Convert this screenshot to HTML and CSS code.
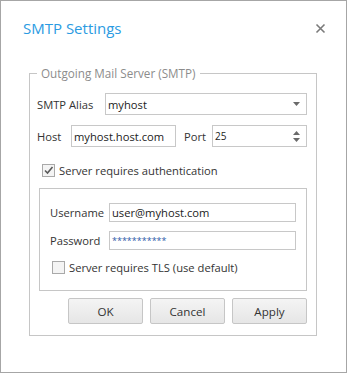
FILE: index.html
```html
<!DOCTYPE html>
<html>
<head>
<meta charset="utf-8">
<link rel="stylesheet" href="styles.css">
</head>
<body>
<div class="dialog">
  <div class="header">
    <span class="title">SMTP Settings</span>
    <svg class="close" width="11" height="11" viewBox="0 0 11 11"><path d="M1.5 1.5L9.5 9.5M9.5 1.5L1.5 9.5" stroke="#7a7a7a" stroke-width="1.6" fill="none"/></svg>
  </div>
  <fieldset class="group">
    <legend class="legend">Outgoing Mail Server (SMTP)</legend>
    <div class="row row-alias">
      <span class="lbl lbl-alias">SMTP Alias</span>
      <div class="field field-select"><span class="val">myhost</span><svg class="drop" width="7" height="4" viewBox="0 0 7 4"><path d="M0 0H7L3.5 4Z" fill="#6a6a6a"/></svg></div>
    </div>
    <div class="row row-host">
      <span class="lbl lbl-host">Host</span>
      <div class="field field-host"><span class="val">myhost.host.com</span></div>
      <span class="lbl lbl-port">Port</span>
      <div class="field field-spin"><span class="val val-small">25</span><svg class="spin" width="7" height="11" viewBox="0 0 7 11"><path d="M0 4H7L3.5 0Z M0 7H7L3.5 11Z" fill="#6a6a6a"/></svg></div>
    </div>
    <div class="check check-auth">
      <span class="box"><svg width="11" height="11" viewBox="0 0 11 11"><path d="M2 5.5L4.5 8L9.5 2" stroke="#5a5a5a" stroke-width="1.6" fill="none"/></svg></span>
      <span class="check-text">Server requires authentication</span>
    </div>
    <div class="authbox">
      <div class="row row-user">
        <span class="lbl lbl-user">Username</span>
        <div class="field field-text"><span class="val">user@myhost.com</span></div>
      </div>
      <div class="row row-pass">
        <span class="lbl lbl-user">Password</span>
        <div class="field field-text"><span class="val pw">***********</span></div>
      </div>
      <div class="check check-tls">
        <span class="box"></span>
        <span class="check-text">Server requires TLS (use default)</span>
      </div>
    </div>
    <div class="buttons">
      <button class="btn">OK</button>
      <button class="btn">Cancel</button>
      <button class="btn">Apply</button>
    </div>
  </fieldset>
</div>
</body>
</html>
```

FILE: styles.css
```css
html, body {
  margin: 0;
  padding: 0;
  background: #ffffff;
}
.dialog {
  box-sizing: border-box;
  width: 347px;
  height: 373px;
  border: 1px solid #a6a6a6;
  background: #ffffff;
  font-family: "Open Sans", "Noto Sans", sans-serif;
  font-size: 11.2px;
  color: #333333;
}
.header {
  display: flex;
  align-items: center;
  justify-content: space-between;
  height: 50px;
  padding: 0 20px 0 22px;
  margin-top: 2px;
}
.title {
  font-size: 15px;
  color: #2a9be2;
}
.close {
  display: block;
}
.group {
  box-sizing: border-box;
  margin: 12px 0 0 28px;
  width: 288px;
  height: 271px;
  padding: 0 9px 0 7px;
  border: 1px solid #c6c6c6;
}
.legend {
  padding: 0 4px;
  color: #8c8c8c;
  font-size: 11.7px;
  line-height: 16px;
}
.row {
  display: flex;
  align-items: center;
}
.row-alias {
  margin-top: 12px;
}
.row-host {
  margin-top: 10px;
}
.lbl {
  flex: none;
  white-space: nowrap;
}
.lbl-alias { width: 68px; }
.lbl-host { width: 34px; }
.lbl-port { width: 28px; margin-left: 8px; }
.lbl-user { width: 59px; }
.field {
  box-sizing: border-box;
  border: 1px solid #c8c8c8;
  display: flex;
  align-items: center;
  padding: 0 2px;
  background: #fff;
  color: #222;
}
.field-select {
  flex: 1;
  height: 22px;
  justify-content: space-between;
  padding-right: 6px;
}
.field-host {
  width: 105px;
  height: 22px;
}
.field-spin {
  flex: 1;
  height: 22px;
  justify-content: space-between;
  padding-right: 6px;
}
.val-small {
  font-size: 10px;
}
.drop, .spin {
  display: block;
}
.check {
  display: flex;
  align-items: center;
  margin: 16px 0 0 5px;
}
.box {
  box-sizing: border-box;
  width: 13px;
  height: 13px;
  border: 1px solid #a9a9a9;
  background: #f4f4f4;
  display: flex;
  align-items: center;
  justify-content: center;
  margin-right: 4px;
}
.authbox {
  box-sizing: border-box;
  margin: 10px 0 0 2px;
  height: 103px;
  border: 1px solid #c6c6c6;
  padding: 14px 10px 0 10px;
}
.row-pass {
  margin-top: 9px;
}
.field-text {
  flex: 1;
  height: 19px;
}
.pw {
  color: #2e5aa8;
  font-size: 9px;
}
.check-tls {
  margin: 10px 0 0 2px;
}
.buttons {
  display: flex;
  justify-content: flex-end;
  gap: 7px;
  margin-top: 7px;
}
.btn {
  box-sizing: border-box;
  width: 75px;
  height: 26px;
  border: 1px solid #c6c6c6;
  border-radius: 2px;
  background: linear-gradient(#f4f4f4, #e6e6e6);
  font-family: "Open Sans", "Noto Sans", sans-serif;
  font-size: 11.6px;
  color: #333;
  padding: 0;
}
```
